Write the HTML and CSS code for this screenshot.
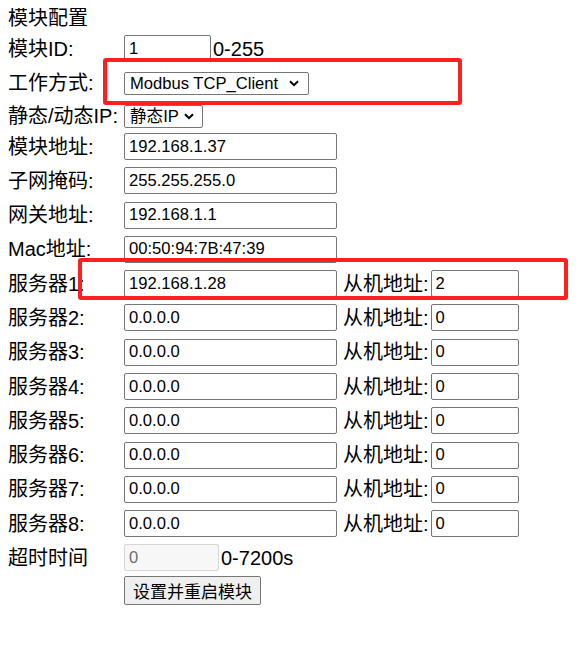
FILE: index.html
```html
<!DOCTYPE html>
<html lang="zh-CN">
<head>
<meta charset="utf-8">
<title>模块配置</title>
<link rel="stylesheet" href="styles.css">
</head>
<body>
<div class="form">
  <div class="title">模块配置</div>

  <div class="row r-id">
    <label class="lbl">模块ID:</label>
    <div class="field"><input class="in in-id" value="1"><span class="hint">0-255</span></div>
  </div>

  <div class="row r-mode">
    <label class="lbl">工作方式:</label>
    <div class="field"><select class="sel sel-mode"><option>Modbus TCP_Client</option></select></div>
  </div>

  <div class="row r-ip">
    <label class="lbl">静态/动态IP:</label>
    <div class="field"><select class="sel sel-ip"><option>静态IP</option></select></div>
  </div>

  <div class="row r-addr">
    <label class="lbl">模块地址:</label>
    <div class="field"><input class="in in-main" value="192.168.1.37"></div>
  </div>
  <div class="row">
    <label class="lbl">子网掩码:</label>
    <div class="field"><input class="in in-main" value="255.255.255.0"></div>
  </div>
  <div class="row">
    <label class="lbl">网关地址:</label>
    <div class="field"><input class="in in-main" value="192.168.1.1"></div>
  </div>
  <div class="row">
    <label class="lbl">Mac地址:</label>
    <div class="field"><input class="in in-main" value="00:50:94:7B:47:39"></div>
  </div>

  <div class="row">
    <label class="lbl">服务器1:</label>
    <div class="field"><input class="in in-main" value="192.168.1.28"><span class="slave-lbl">从机地址:</span><input class="in in-slave" value="2"></div>
  </div>
  <div class="row">
    <label class="lbl">服务器2:</label>
    <div class="field"><input class="in in-main" value="0.0.0.0"><span class="slave-lbl">从机地址:</span><input class="in in-slave" value="0"></div>
  </div>
  <div class="row">
    <label class="lbl">服务器3:</label>
    <div class="field"><input class="in in-main" value="0.0.0.0"><span class="slave-lbl">从机地址:</span><input class="in in-slave" value="0"></div>
  </div>
  <div class="row">
    <label class="lbl">服务器4:</label>
    <div class="field"><input class="in in-main" value="0.0.0.0"><span class="slave-lbl">从机地址:</span><input class="in in-slave" value="0"></div>
  </div>
  <div class="row">
    <label class="lbl">服务器5:</label>
    <div class="field"><input class="in in-main" value="0.0.0.0"><span class="slave-lbl">从机地址:</span><input class="in in-slave" value="0"></div>
  </div>
  <div class="row">
    <label class="lbl">服务器6:</label>
    <div class="field"><input class="in in-main" value="0.0.0.0"><span class="slave-lbl">从机地址:</span><input class="in in-slave" value="0"></div>
  </div>
  <div class="row">
    <label class="lbl">服务器7:</label>
    <div class="field"><input class="in in-main" value="0.0.0.0"><span class="slave-lbl">从机地址:</span><input class="in in-slave" value="0"></div>
  </div>
  <div class="row">
    <label class="lbl">服务器8:</label>
    <div class="field"><input class="in in-main" value="0.0.0.0"><span class="slave-lbl">从机地址:</span><input class="in in-slave" value="0"></div>
  </div>

  <div class="row r-timeout">
    <label class="lbl">超时时间</label>
    <div class="field"><input class="in in-time" value="0" disabled><span class="hint">0-7200s</span></div>
  </div>

  <div class="row r-btn">
    <span class="lbl"></span>
    <div class="field"><button class="btn" type="button">设置并重启模块</button></div>
  </div>
</div>

<div class="mark mark-mode"></div>
<div class="mark mark-server"></div>
</body>
</html>
```

FILE: styles.css
```css
* { box-sizing: border-box; }

body {
  margin: 8px;
  font-family: "Liberation Sans", Arial, "Noto Sans CJK SC", sans-serif;
  font-size: 20px;
  color: #000;
  background: #fff;
}

.title {
  height: 20px;
  line-height: 20px;
}

.row {
  display: grid;
  grid-template-columns: 116px auto;
  align-items: center;
  height: 27px;
  margin-top: 7.3px;
  line-height: 24px;
}

.r-id { margin-top: 7px; }
.r-mode { height: 23px; margin-top: 9px; }
.r-ip { height: 23px; margin-top: 10px; }
.r-addr { margin-top: 6px; }
.r-timeout { margin-top: 7px; }
.r-btn { height: 29px; margin-top: 5px; }

.lbl {
  white-space: nowrap;
}

.field {
  display: flex;
  align-items: center;
  height: 100%;
}

.in {
  height: 27px;
  border: 1px solid #767676;
  border-radius: 2px;
  padding: 0 4px;
  font-family: "Liberation Sans", Arial, "Noto Sans CJK SC", sans-serif;
  font-size: 16.6px;
  color: #000;
  background: #fff;
  margin: 0;
}

.in-id { width: 87px; }
.in-main { width: 213px; }
.in-slave { width: 88px; }
.in-time {
  width: 95px;
  background: #f7f7f7;
  border-color: #d6d6d6;
  color: #6d6d6d;
}

.hint {
  margin-left: 2px;
}

.slave-lbl {
  margin-left: 6px;
  margin-right: 2px;
  white-space: nowrap;
}

.sel {
  -webkit-appearance: none;
  appearance: none;
  height: 23px;
  border: 1px solid #767676;
  border-radius: 2px;
  padding: 0 0 0 5px;
  font-family: "Liberation Sans", Arial, "Noto Sans CJK SC", sans-serif;
  font-size: 16.6px;
  color: #000;
  background-color: #fff;
  background-image: url("data:image/svg+xml;utf8,<svg xmlns='http://www.w3.org/2000/svg' width='10' height='7' viewBox='0 0 10 7'><polyline points='1,1.2 5,5.2 9,1.2' fill='none' stroke='black' stroke-width='2'/></svg>");
  background-repeat: no-repeat;
  background-size: 10px 7px;
  margin: 0;
}

.sel-mode {
  width: 185px;
  background-position: right 9px center;
}

.sel-ip {
  width: 79px;
  background-position: right 8px center;
}

.btn {
  height: 29px;
  padding: 0 8px;
  border: 1px solid #767676;
  border-radius: 2px;
  background: #efefef;
  font-family: "Liberation Sans", Arial, "Noto Sans CJK SC", sans-serif;
  font-size: 17px;
  color: #000;
  margin: 0;
}

.mark {
  position: absolute;
  border: 4px solid #ff1f1f;
  border-radius: 3px;
  pointer-events: none;
}

.mark-mode {
  left: 103px;
  top: 58px;
  width: 359px;
  height: 47px;
}

.mark-server {
  left: 78px;
  top: 258px;
  width: 490px;
  height: 42px;
}
```
